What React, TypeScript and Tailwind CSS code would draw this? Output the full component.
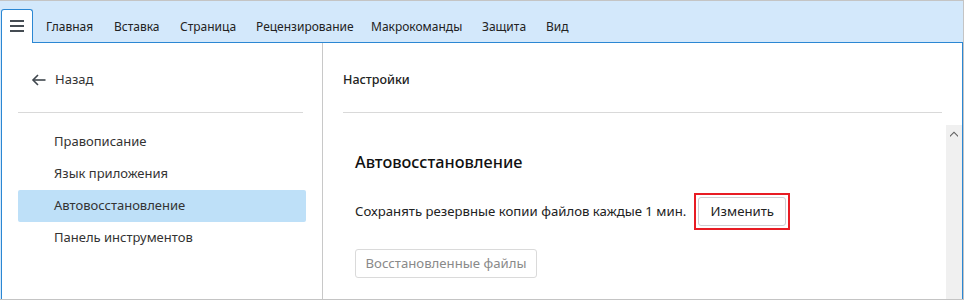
import React from "react";

const tabs: { label: string; w: string }[] = [
  { label: "Главная", w: "w-[68px]" },
  { label: "Вставка", w: "w-[66px]" },
  { label: "Страница", w: "w-[76px]" },
  { label: "Рецензирование", w: "w-[115px]" },
  { label: "Макрокоманды", w: "w-[111px]" },
  { label: "Защита", w: "w-[64px]" },
  { label: "Вид", w: "w-[40px]" },
];

const items = ["Правописание", "Язык приложения", "Автовосстановление", "Панель инструментов"];

export default function App() {
  return (
    <div
      className="w-[964px] h-[300px] flex flex-col bg-[#d3e8fb] border-t border-r border-b border-[#c4c4c4] overflow-hidden text-[#333333]"
      style={{ fontFamily: '"Noto Sans", "Open Sans", sans-serif' }}
    >
      {/* toolbar */}
      <div className="h-[41px] flex items-end shrink-0">
        <div className="ml-px w-[32px] h-[34px] bg-white border-l border-t border-r border-[#2b87d3] rounded-t-[3px] relative z-10 -mb-px flex flex-col items-center justify-center gap-[3px] pb-px">
          <span className="block w-[14px] h-[2px] bg-[#454c53]" />
          <span className="block w-[14px] h-[2px] bg-[#454c53]" />
          <span className="block w-[14px] h-[2px] bg-[#454c53]" />
        </div>
        <div className="flex h-full items-center pl-[13px] pt-[10px] text-[12px] text-[#222]">
          {tabs.map((t) => (
            <div key={t.label} className={`${t.w} shrink-0 whitespace-nowrap`}>
              {t.label}
            </div>
          ))}
        </div>
      </div>

      {/* content */}
      <div className="flex-1 ml-px bg-white border-l border-t border-r border-[#2b87d3] flex min-h-0">
        {/* left panel */}
        <div className="w-[321px] shrink-0 border-r border-[#c8c8c8] px-[16px] flex flex-col">
          <div className="h-[69px] flex items-center gap-[8px] pl-[13px] pt-[5px] text-[13px]">
            <svg width="16" height="16" viewBox="0 0 16 16" fill="none" stroke="#3f464d" strokeWidth="1.6">
              <path d="M14.5 8H2" />
              <path d="M7 3L2 8l5 5" />
            </svg>
            <span>Назад</span>
          </div>
          <div className="h-px bg-[#d9d9d9] w-[285px]" />
          <div className="mt-[13px] flex flex-col">
            {items.map((it) => (
              <div
                key={it}
                className={`h-[32px] flex items-center pl-[36px] text-[13px] rounded-[2px] w-[288px] ${
                  it === "Автовосстановление" ? "bg-[#bee0f8]" : ""
                }`}
              >
                {it}
              </div>
            ))}
          </div>
        </div>

        {/* right panel */}
        <div className="flex-1 flex flex-col min-w-0">
          <div className="px-[20px]">
            <div className="h-[69px] flex items-center pt-[5px] text-[12.5px] font-medium text-[#222]">Настройки</div>
            <div className="h-px bg-[#d9d9d9]" />
          </div>
          <div className="flex-1 flex mt-[12px] min-h-0">
            <div className="flex-1 pl-[32px] pt-[26px]">
              <div className="text-[16.3px] font-medium leading-[22px] text-[#111]">Автовосстановление</div>
              <div className="mt-[20px] flex items-center">
                <span className="text-[13.2px] text-[#222] whitespace-nowrap">
                  Сохранять резервные копии файлов каждые 1 мин.
                </span>
                <div className="ml-[8px] border-2 border-[#e81c24] p-[2px]">
                  <button className="w-[88px] h-[29px] bg-white border border-[#cfcfd4] rounded-[3px] text-[13.2px] text-[#222] flex items-center justify-center">
                    Изменить
                  </button>
                </div>
              </div>
              <button className="mt-[19px] w-[182px] h-[29px] bg-white border border-[#dadada] rounded-[3px] text-[13.2px] text-[#8a8a8a] flex items-center justify-center">
                Восстановленные файлы
              </button>
            </div>
            <div className="w-[16px] bg-[#f0f0f0] flex justify-center pt-[6px] shrink-0">
              <svg width="8" height="6" viewBox="0 0 8 6">
                <path d="M0 4.5L4 0.5L8 4.5V6L4 2L0 6Z" fill="#606060" />
              </svg>
            </div>
          </div>
        </div>
      </div>
    </div>
  );
}
